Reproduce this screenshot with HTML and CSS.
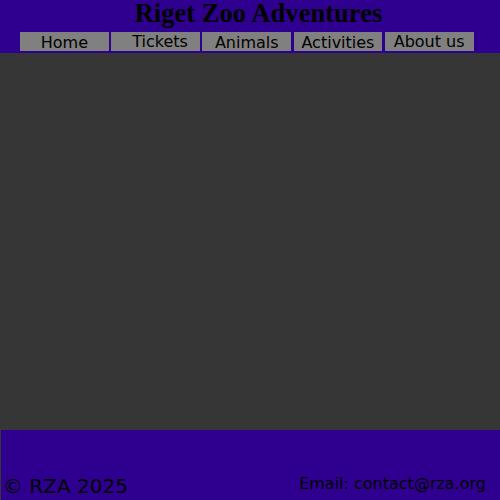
FILE: index.html
```html
<!DOCTYPE html>
<html lang="en">
<head>
<meta charset="utf-8">
<title>Riget Zoo Adventures</title>
<link rel="stylesheet" href="styles.css">
</head>
<body>
<header class="site-header">
  <h1 class="site-title">Riget Zoo Adventures</h1>
  <nav class="main-nav">
    <a class="nav-link" href="#">Home</a>
    <a class="nav-link nav-link-up nav-link-shift" href="#">Tickets</a>
    <a class="nav-link" href="#">Animals</a>
    <a class="nav-link" href="#">Activities</a>
    <a class="nav-link nav-link-up" href="#">About us</a>
  </nav>
</header>
<main class="content"></main>
<footer class="site-footer">
  <p class="copyright">© RZA 2025</p>
  <p class="contact">Email: contact@rza.org</p>
</footer>
</body>
</html>
```
FILE: styles.css
```css
html, body {
  margin: 0;
  padding: 0;
  height: 100%;
}
body {
  background: #363636;
  font-family: "DejaVu Sans", sans-serif;
  color: #000;
  display: flex;
  flex-direction: column;
}
.site-header {
  background: #2f008f;
  height: 53px;
  box-sizing: border-box;
}
.site-title {
  margin: 0;
  font-family: "Liberation Serif", serif;
  font-weight: bold;
  font-size: 26.6px;
  line-height: 27px;
  height: 27px;
  text-align: center;
  padding-left: 17px;
}
.main-nav {
  display: flex;
  gap: 2.4px;
  padding-left: 20px;
  margin-top: 5px;
}
.nav-link {
  display: block;
  width: 88.8px;
  height: 19px;
  box-sizing: border-box;
  padding-top: 1px;
  background: #808080;
  color: #000;
  text-decoration: none;
  text-align: center;
  font-size: 16px;
  line-height: 19px;
}
.nav-link-up {
  padding-top: 0;
}
.nav-link-shift {
  padding-left: 9px;
}
.content {
  flex: 1;
}
.site-footer {
  background: #2f008f;
  height: 70px;
  margin-left: 1px;
  display: flex;
  justify-content: space-between;
  align-items: flex-start;
  padding: 44px 14px 0 2px;
  box-sizing: border-box;
}
.copyright {
  margin: 0;
  font-size: 20px;
}
.contact {
  margin: 0;
  font-size: 16px;
}
```
